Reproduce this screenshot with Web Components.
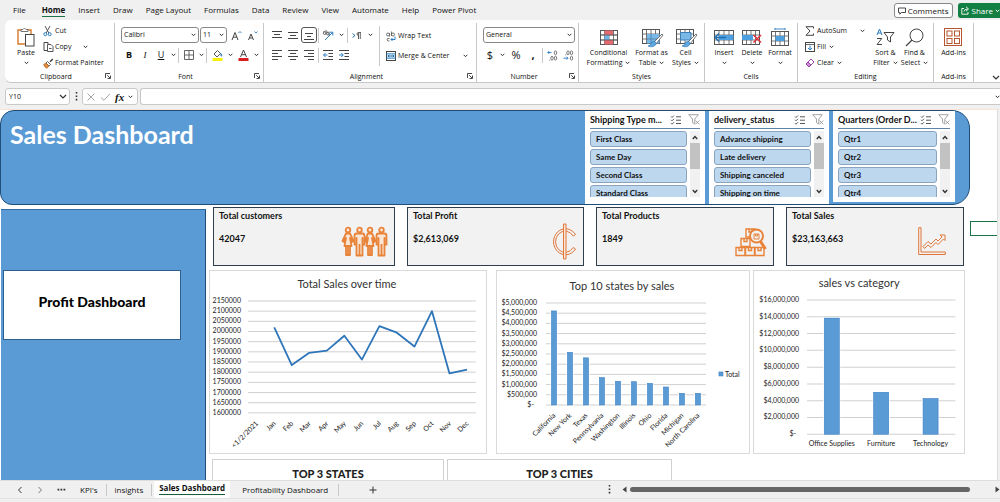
<!DOCTYPE html>
<html lang="en">
<head>
<meta charset="utf-8">
<meta name="viewport" content="width=device-width, initial-scale=1">
<title>Sales Dashboard</title>
<style>
html,body{margin:0;height:100%}
body{font-family:"Open Sans","Noto Sans",sans-serif;font-size:8px;line-height:10px;color:#111;background:#f0f0f0;overflow:hidden}
</style>
</head>
<body>
<excel-app></excel-app>
<script>
const reset = `*{box-sizing:border-box}
button,input,select{font:inherit;color:inherit;background:none;border:0;margin:0;padding:0;outline:0}
a{color:inherit;text-decoration:none}`;

function define(name, html) {
  customElements.define(name, class extends HTMLElement {
    constructor() {
      super();
      this.attachShadow({mode: 'open'});
    }
    connectedCallback() {
      if (this.shadowRoot.childNodes.length) return;
      const t = document.createElement('template');
      t.innerHTML = `<style>${reset}</style>` + (typeof html === 'function' ? html(this) : html);
      this.shadowRoot.append(t.content.cloneNode(true));
    }
  });
}

/* ---------- icons: [width, height, markup] ---------- */
const gridLines = (w, h) => `<rect x=".5" y=".5" width="${w - 1}" height="${h - 1}" fill="#fff" stroke="#555"/><path d="M0 ${h / 3}H${w}M0 ${h * 2 / 3}H${w}M${w / 4} 0V${h}M${w / 2} 0V${h}M${w * 3 / 4} 0V${h}" stroke="#555" stroke-width=".8"/>`;
const bars = (ys, xs) => `<path d="${ys.map((y, i) => `M${xs[i][0]} ${y}H${xs[i][1]}`).join('')}" stroke="#444" stroke-width="1.1"/>`;
const person = (x, skirt) => `<g transform="translate(${x} 0)"><circle cx="5.500" cy="3" r="2.300"/>${skirt
  ? '<path d="M3.500 6.500H7.500L11 14L9.500 15L7.500 11L9 19H2L3.500 11L1.500 15L0 14ZM3.500 19V28H7.500V19M5.500 19V28"/>'
  : '<path d="M2.500 6.500H8.500Q10.500 6.500 10.500 9V17.500H8.500V11V28.500H2.500V11V17.500H.500V9Q.500 6.500 2.500 6.500ZM5.500 17V28"/>'}</g>`;
const box = (x, y) => `<path d="M${x} ${y}h9v8h-9zM${x + 3} ${y}v3h3v-3"/>`;
const brush = `<path d="M20 5L12 13L14 15L21 6Z" fill="#fff" stroke="#555" stroke-width=".8"/><path d="M13 12.500Q9 12 8.500 15Q8 17 6 17Q11 19 13.500 16Q15 14.500 13 12.500Z" fill="#5fa8df" stroke="#1f6fb2" stroke-width=".6"/>`;
const icons = {
  chev: [5, 4, '<path d="M.7 .8L2.500 2.700L4.300 .8" fill="none" stroke="#333"/>'],
  chevBig: [8, 5, '<path d="M1 1L4 4L7 1" fill="none" stroke="#333" stroke-width="1.200"/>'],
  paste: [18, 20, '<path d="M4 3H1V17H8M11 3H14V7" fill="none" stroke="#d87a2a" stroke-width="1.400"/><path d="M4 4.500V2.500H6Q7.500-.5 9 2.500H11V4.500Z" fill="#fff" stroke="#666" stroke-width=".9"/><rect x="8.500" y="7.500" width="8.500" height="11.500" fill="#fff" stroke="#444"/>'],
  cut: [9, 12, '<path d="M2 1L5.800 8M7 1L3.200 8" stroke="#444" stroke-width=".9"/><circle cx="2.300" cy="9.200" r="1.500" fill="none" stroke="#2b7cc1"/><circle cx="6.700" cy="9.200" r="1.500" fill="none" stroke="#2b7cc1"/>'],
  copy: [11, 12, '<path d="M4 9.500H1V1.500H5V3" fill="none" stroke="#444"/><path d="M4.500 3.500H8L10 5.500V10.500H4.500ZM6 7.500H8.500" fill="#fff" stroke="#444" stroke-width=".9"/>'],
  painter: [11, 11, '<path d="M9.800 1L7 3.800" stroke="#444" stroke-width="1.500"/><path d="M4.500 3.500L7.500 6.500L6 8L3 5Z" fill="#fff" stroke="#444" stroke-width=".8"/><path d="M3 5L6 8L4 10.300Q1.500 9.500 .6 6.400Z" fill="#e08a3c" stroke="#a65a1a" stroke-width=".6"/>'],
  borders: [10, 10, '<path d="M.500 .500H9.500V9.500H.500ZM5 .500V9.500M.500 5H9.500" fill="none" stroke="#555" stroke-width=".9"/>'],
  fill: [11, 12, '<path d="M2 5L5.500 1.500L8.500 4.500L5 8Z" fill="#fff" stroke="#444" stroke-width=".9"/><path d="M9 4.500Q10.500 7 9.300 7.300Q8.300 7 9 4.500" fill="#2b7cc1" stroke="#2b7cc1" stroke-width=".6"/><rect x=".5" y="9" width="10" height="3" fill="#f7f10a"/>'],
  fontcolor: [11, 12, '<path d="M2.500 8L5.500 1L8.500 8M3.500 5.700H7.500" fill="none" stroke="#444"/><rect x=".5" y="9" width="10" height="3" fill="#d81e1e"/>'],
  growA: [11, 11, '<path d="M1 10L4 2.500L7 10M2.200 7.200H5.800" fill="none" stroke="#444"/><path d="M7.500 3L9 1.500L10.500 3" fill="none" stroke="#2b7cc1" stroke-width=".9"/>'],
  shrinkA: [11, 11, '<path d="M1.500 10L4 4L6.500 10M2.500 8H5.500" fill="none" stroke="#444"/><path d="M7.500 1.500L9 3L10.500 1.500" fill="none" stroke="#2b7cc1" stroke-width=".9"/>'],
  atop: [10, 10, bars([1.5, 4.5, 7.5], [[0, 10], [2, 8], [0, 10]])],
  amid: [10, 10, bars([2.5, 5.5, 8.5], [[0, 10], [2, 8], [0, 10]])],
  abot: [10, 10, bars([3.5, 6.5, 9.5], [[1, 9], [3, 7], [0, 10]])],
  left: [10, 10, bars([.5, 3.5, 6.5, 9.5], [[0, 10], [0, 6], [0, 10], [0, 6]])],
  center: [10, 10, bars([.5, 3.5, 6.5, 9.5], [[0, 10], [2, 8], [0, 10], [2, 8]])],
  right: [10, 10, bars([.5, 3.5, 6.5, 9.5], [[0, 10], [4, 10], [0, 10], [4, 10]])],
  orient: [12, 12, '<g fill="none" stroke="#555" stroke-width=".8"><circle cx="2.800" cy="4" r="1.500"/><path d="M1.500 2L5 5.500"/><circle cx="6" cy="4.600" r="1.500"/><path d="M3.500 .800L7.500 6"/></g><path d="M3 11L10.500 3.500M7.500 3.200H10.800V6.500" fill="none" stroke="#2b7cc1"/>'],
  rtl: [10, 9, '<path d="M.500 2.500L3 4.500L.500 6.500" fill="none" stroke="#2b7cc1"/><path d="M9 1.500H6.500Q5 1.500 5 3Q5 4.500 6.500 4.500V8M6.500 1.500V8M8.300 1.500V8" fill="none" stroke="#555" stroke-width=".9"/>'],
  outdent: [10, 10, '<path d="M0 .5H10M5.500 3.500H10M5.500 6.500H10M0 9.500H10" stroke="#444"/><path d="M4.500 5H.800M2.500 3L.500 5L2.500 7" fill="none" stroke="#2b7cc1"/>'],
  indent: [10, 10, '<path d="M0 .5H10M5.500 3.500H10M5.500 6.500H10M0 9.500H10" stroke="#444"/><path d="M0 5H4M2.300 3L4.300 5L2.300 7" fill="none" stroke="#2b7cc1"/>'],
  wrap: [10, 11, '<g fill="none" stroke="#555" stroke-width=".8"><circle cx="2" cy="3.500" r="1.500"/><path d="M3.600 2V5.500M5.500 .5V5"/><circle cx="7" cy="3.500" r="1.500"/><path d="M3.500 7.500Q.5 7 1 9Q1.500 10.500 3.500 10"/></g><path d="M9 5.500V8.500H5M6.500 7L5 8.500L6.500 10" fill="none" stroke="#2b7cc1"/>'],
  merge: [10, 10, '<rect x=".5" y=".5" width="9" height="9" fill="#fff" stroke="#444"/><rect x="1" y="3" width="8" height="4" fill="#bfe0f7"/><path d="M0 2.700H10M0 7.300H10" stroke="#2b7cc1" stroke-width=".8"/><path d="M2 5H8M3.200 3.800L2 5L3.200 6.200M6.800 3.800L8 5L6.800 6.200" fill="none" stroke="#1f5f9a" stroke-width=".8"/>'],
  decinc: [11, 11, '<path d="M4.500 2.500H.800M2.300 1L.800 2.500L2.300 4" fill="none" stroke="#2b7cc1" stroke-width=".9"/><g fill="none" stroke="#555" stroke-width=".8"><ellipse cx="8.500" cy="2.800" rx="1.200" ry="1.900"/><ellipse cx="5" cy="8.200" rx="1.200" ry="1.900"/><ellipse cx="8.500" cy="8.200" rx="1.200" ry="1.900"/><path d="M2.300 10.200H3.100"/></g>'],
  decdec: [11, 11, '<path d="M.500 8.200H5M3.500 6.700L5 8.200L3.500 9.700" fill="none" stroke="#2b7cc1" stroke-width=".9"/><g fill="none" stroke="#555" stroke-width=".8"><ellipse cx="5" cy="2.800" rx="1.200" ry="1.900"/><ellipse cx="8.500" cy="2.800" rx="1.200" ry="1.900"/><ellipse cx="8.500" cy="8.200" rx="1.200" ry="1.900"/><path d="M2.300 4.800H3.100"/></g>'],
  cond: [18, 15, gridLines(18, 15) + '<path d="M4.500 .5H13V5H4.500ZM4.500 10H13V14.500H4.500Z" fill="#e46a6f"/><path d="M4.500 5H9V10H4.500Z" fill="#6fb3e6"/><path d="M0 5H18M0 10H18" stroke="#555" stroke-width=".8"/>'],
  fmtTable: [20, 17, gridLines(18, 15) + '<path d="M5 5H17.500V14.500H5Z" fill="#7ab8e8"/><path d="M9 5V15M5 10H18" stroke="#4d7ea6" stroke-width=".8"/>' + brush],
  cellStyle: [20, 17, gridLines(18, 15) + '<path d="M4.500 3.500H15V11H4.500Z" fill="#7ab8e8" stroke="#3c7fb5"/>' + brush],
  insert: [20, 15, gridLines(20, 15) + '<path d="M5 5H19.500V10H5Z" fill="#4da0e0"/><path d="M12 7.500H1.500M5 3.500L1 7.500L5 11.500" fill="none" stroke="#1f6fb2" stroke-width="1.300"/>'],
  delete: [20, 15, gridLines(18, 15) + '<path d="M0 5H11V10H0Z" fill="#4da0e0"/><path d="M11.500 5L19 12.500M19 5L11.500 12.500" stroke="#e0333c" stroke-width="1.500"/>'],
  format: [18, 18, '<g transform="translate(0 3)">' + gridLines(18, 15) + '<path d="M4.500 5H13.500V10H4.500Z" fill="#4da0e0"/></g><path d="M4 1H14M4 0V2M14 0V2" stroke="#2b7cc1" stroke-width=".9"/>'],
  sum: [10, 10, '<path d="M8.500 2.500V.7H1L5 5L1 9.300H8.500V7.500" fill="none" stroke="#444"/>'],
  filldown: [10, 10, '<rect x=".5" y=".5" width="9" height="9" fill="#fff" stroke="#444"/><path d="M.5 2.500H9.500" stroke="#444" stroke-width=".8"/><path d="M5 3.500V8M3 6L5 8L7 6" fill="none" stroke="#2b7cc1"/>'],
  eraser: [10, 10, '<path d="M1 6L6 1L9 4L4 9Z" fill="#fff" stroke="#9b45a8"/><path d="M1 6L3 4L6 7L4 9Z" fill="#c98ad2" stroke="#9b45a8"/>'],
  sort: [19, 18, '<path d="M1 7L3.500 1L6 7M2 5H5" fill="none" stroke="#2b7cc1"/><path d="M1 10.500H5.800L1 16.500H6" fill="none" stroke="#444"/><path d="M8 4.500H18L14.500 9V14L11.500 12V9Z" fill="#fff" stroke="#444"/>'],
  find: [19, 19, '<circle cx="11.500" cy="7.500" r="6.500" fill="#fff" stroke="#444"/><path d="M7 12L1 18" stroke="#444" stroke-width="1.200"/>'],
  addins: [18, 18, '<rect x=".5" y=".5" width="17" height="17" fill="#fff" stroke="#b5562f"/><g fill="none" stroke="#b5562f"><rect x="3" y="3" width="5" height="5"/><rect x="10.500" y="3" width="5" height="5"/><rect x="3" y="10.500" width="5" height="5"/><rect x="10.500" y="10.500" width="5" height="5"/></g>'],
  launch: [6, 6, '<path d="M.5 5V.5H5M2.200 2.200L5 5M5.500 2.500V5.500H2.500" fill="none" stroke="#333" stroke-width=".9"/>'],
  comment: [8, 8, '<path d="M.5 1H7.500V5.500H3.500L1.800 7.200V5.500H.5Z" fill="none" stroke="#333" stroke-width=".9"/>'],
  share: [9, 9, '<path d="M3 2.500H.8V8.200H7V6M3 5.500Q3.500 3 6.500 3M5 .8L7.500 3L5 5.200" fill="none" stroke="#fff" stroke-width=".9"/>'],
  shareChev: [5, 4, '<path d="M.7 .8L2.500 2.700L4.300 .8" fill="none" stroke="#fff"/>'],
  cross: [10, 8, '<path d="M1.500 .500L8.500 7.500M8.500 .500L1.500 7.500" stroke="#999" stroke-width=".9"/>'],
  tick: [11, 8, '<path d="M1 4.500L4 7.300L10 .700" fill="none" stroke="#999" stroke-width=".9"/>'],
  multi: [12, 10, '<path d="M1 1.500L2 2.500L4 .500M1 4.800L2 5.800L4 3.800M1 8.200L2 9.200L4 7.200M6 1.800H11M6 5.200H11M6 8.500H11" fill="none" stroke="#444" stroke-width=".9"/>'],
  nofilter: [12, 11, '<path d="M.700 .700H10.300L6.800 5V10L4.500 8.500V5Z" fill="#fff" stroke="#9a9a9a" stroke-width=".9"/><path d="M7.500 6.500L11.300 10.300M11.300 6.500L7.500 10.300" stroke="#9a9a9a" stroke-width=".9"/>'],
  up: [6, 5, '<path d="M.8 4L3 1.500L5.200 4" fill="none" stroke="#333" stroke-width="1.400"/>'],
  down: [6, 5, '<path d="M.8 1L3 3.500L5.200 1" fill="none" stroke="#333" stroke-width="1.400"/>'],
  prev: [6, 8, '<path d="M4.500 1L1.500 4L4.500 7" fill="none" stroke="#333"/>'],
  next: [6, 8, '<path d="M1.500 1L4.500 4L1.500 7" fill="none" stroke="#777"/>'],
  plus: [8, 8, '<path d="M4 .5V7.500M.5 4H7.500" stroke="#333"/>'],
  dots: [3, 9, '<path d="M.7 0h1.600v1.600h-1.600zM.7 3.400h1.600v1.600h-1.600zM.7 6.800h1.600v1.600h-1.600z" fill="#333"/>'],
  ellipsis: [9, 3, '<path d="M.5 .7h1.800v1.700h-1.800zM3.500 .7h1.800v1.700h-1.800zM6.500 .7h1.800v1.700h-1.800z" fill="#333"/>'],
  triL: [5, 7, '<path d="M4.500 .5V6.500L.5 3.500Z" fill="#444"/>'],
  triR: [5, 7, '<path d="M.5 .5V6.500L4.500 3.500Z" fill="#444"/>'],
  people: [46, 30, `<g fill="#fbe6d6" stroke="#e8833a" stroke-width="1.800" stroke-linejoin="round">${person(.5, 1)}${person(12, 0)}${person(22.5, 1)}${person(34, 0)}</g>`],
  cent: [26, 37, '<g fill="none" stroke="#e0763a" stroke-width="1"><path d="M24.500 11.500A12 13 0 1 0 24.500 26L22.200 24.500A9.600 10.600 0 1 1 22.200 13Z"/><path d="M12.500 1H15V36H12.500Z" fill="#fbe6d6"/></g>'],
  boxes: [32, 30, `<g fill="none" stroke="#e8833a" stroke-width="1.400">${box(1, 20.5)}${box(10.5, 20.5)}${box(20, 20.5)}${box(6, 11.500)}${box(11, 2)}</g><circle cx="21.500" cy="9" r="6.500" fill="#f2f2f2" stroke="#e8833a" stroke-width="2"/><path d="M19 7v5h5v-5zM20.500 7v2h2v-2" fill="none" stroke="#e8833a"/><path d="M25.500 14.500L30.500 22" stroke="#e8833a" stroke-width="3"/>`],
  trend: [28, 29, '<g fill="none" stroke="#e0763a" stroke-width="1"><path d="M.700 .700H3V25H27.300V27.500H.700Z"/><path d="M5 19.500L10 14.500L13 17L18 12L20 14L24 10L22 8H27V13.500L25.500 12L20 17.500L18 15.500L13 20.500L10 18L6.500 21.500Z"/></g>']
};
define('ui-icon', host => {
  const [w, h, body] = icons[host.getAttribute('name')];
  return `<style>:host{display:block;flex:none;width:${w}px;height:${h}px}svg{display:block;overflow:visible}</style><svg width="${w}" height="${h}" viewBox="0 0 ${w} ${h}" aria-hidden="true">${body}</svg>`;
});

/* ---------- title tabs ---------- */
define('menu-bar', `<style>
:host{display:flex;height:20px;align-items:center;font-size:8px;padding-left:5px}
nav{display:flex;gap:4px}
a{padding:0 4px 0 5px;line-height:13px;white-space:nowrap}
a:first-child{padding:0 7px 0 8px}
a.on{font-weight:700}
a.on::after{content:"";display:block;height:1px;background:#1a7346}
.r{margin-left:auto;display:flex;gap:5px;align-self:flex-end;margin-bottom:2px}
button{display:flex;align-items:center;gap:2px;height:15px;border-radius:3px;padding:0 3px;background:#fff;border:1px solid #888;white-space:nowrap}
.g{background:#138043;border-color:#138043;color:#fff;border-radius:3px 0 0 3px;border-right:0;padding:0 0 0 2px}
</style>
<nav>${['File', 'Home', 'Insert', 'Draw', 'Page Layout', 'Formulas', 'Data', 'Review', 'View', 'Automate', 'Help', 'Power Pivot'].map(t => `<a href="#" class="${t === 'Home' ? 'on' : ''}">${t}</a>`).join('')}</nav>
<div class="r"><button><ui-icon name="comment"></ui-icon>Comments</button><button class="g"><ui-icon name="share"></ui-icon>Share<ui-icon name="shareChev"></ui-icon></button></div>`);

/* ---------- ribbon ---------- */
define('ribbon-group', host => `<style>
:host{display:grid;grid-template-rows:1fr 12px;min-width:0;position:relative;margin:3px 0;border-right:1px solid #c8c8c8}
.b{min-width:0}
.l{display:flex;justify-content:center;line-height:11px;font-size:7px}
:host([launch]) .l{padding-right:7px}
ui-icon{position:absolute;right:3px;bottom:4px}
</style><div class="b"><slot></slot></div><div class="l">${host.getAttribute('label') || ''}</div>${host.hasAttribute('launch') ? '<ui-icon name="launch"></ui-icon>' : ''}`);

define('big-tool', host => `<style>
:host{display:block;flex:none}
button{display:flex;flex-direction:column;align-items:center;width:100%;font-size:7px;line-height:10px;white-space:nowrap}
.i{height:22px;display:flex;align-items:center}
.t{display:flex;align-items:center;gap:3px;height:10px}
</style><button><span class="i"><ui-icon name="${host.getAttribute('icon')}"></ui-icon></span><span class="t">${host.getAttribute('a')}</span><span class="t">${host.getAttribute('b') || ''}${host.hasAttribute('plain') ? '' : '<ui-icon name="chev"></ui-icon>'}</span></button>`);

define('row-tool', host => `<style>
:host{display:block}
button{display:flex;align-items:center;height:16px;font-size:7px;white-space:nowrap;width:100%}
.i{width:12px;flex:none}
ui-icon[name=chev]{margin-left:3px}
:host([far]) ui-icon[name=chev]{margin-left:auto}
:host([wide]) ui-icon[name=chev]{margin-left:12px}
</style><button><span class="i"><ui-icon name="${host.getAttribute('icon')}"></ui-icon></span>${host.getAttribute('text')}${host.hasAttribute('drop') || host.hasAttribute('far') ? '<ui-icon name="chev"></ui-icon>' : ''}</button>`);

define('drop-box', host => `<style>
:host{display:block;position:relative;height:16px;flex:none}
select{appearance:none;width:100%;height:100%;border:1px solid #888;border-radius:3px;background:#fff;padding:0 3px 1px 2px;font-size:7px}
ui-icon{position:absolute;right:3px;top:6px;pointer-events:none}
</style><select aria-label="${host.getAttribute('label')}"><option>${host.getAttribute('value')}</option></select><ui-icon name="chev"></ui-icon>`);

const ib = (n, w = 16, cls = '') => `<button class="ib ${cls}" style="width:${w}px" aria-label="${n}"><ui-icon name="${n}"></ui-icon></button>`;
const tb = (t, w, cls) => `<button class="ib ${cls}" style="width:${w}px">${t}</button>`;
define('ribbon-bar', `<style>
:host{display:grid;grid-template-columns:110fr 149fr 213fr 102fr 126fr 93fr 136fr 40fr 26fr;height:63px;margin-left:5px;background:#fff;border-radius:6px 0 0 6px;border-bottom:1px solid #c8c8c8}
.row{display:flex;align-items:center;height:20px}
.top{padding-top:2px;height:22px}
.ib{display:flex;align-items:center;justify-content:center;height:16px;flex:none}
.boxed{border:1px solid #555;border-radius:3px}
.sep{width:1px;height:15px;background:#c8c8c8;flex:none;margin:0 1px}
.cols{display:flex}
.clip{padding-left:8px;gap:4px}
.clip>div{width:64px}
.f{padding-left:6px}
.sz{font-size:9px}.b{font-weight:700}.i{font-style:italic;font-family:"Liberation Serif",serif}.u{text-decoration:underline}.big{font-size:11px}
.al{padding-left:5px}
.side{border-left:1px solid #c8c8c8;margin:3px 0 4px;padding:0 4px 0 6px;width:93px;height:40px;display:grid;grid-template-rows:20px 20px;align-items:center}
.main{width:110px}
.st{justify-content:center;padding:3px 4px 0 6px}
.ed{padding:0 6px 0 7px}
.ed .rows{width:60px}
.big-cols{padding-top:3px}
.mid{justify-content:center}
.more{display:flex;justify-content:flex-end;align-items:flex-end;padding:0 0 6px}
</style>
<ribbon-group label="Clipboard" launch><div class="cols clip"><big-tool icon="paste" a="Paste" style="width:26px;padding-top:3px"></big-tool>
<div><row-tool icon="cut" text="Cut"></row-tool><row-tool icon="copy" text="Copy" drop wide></row-tool><row-tool icon="painter" text="Format Painter"></row-tool></div></div></ribbon-group>
<ribbon-group label="Font" launch><div class="f"><div class="row top"><drop-box label="Font" value="Calibri" style="width:78px"></drop-box><drop-box label="Font size" value="11" style="width:27px;margin:0 1px"></drop-box>${ib('growA')}${ib('shrinkA')}</div>
<div class="row">${tb('B', 16, 'sz b')}${tb('I', 16, 'sz i')}${tb('U', 16, 'sz u')}${ib('chev', 8)}<span class="sep"></span>${ib('borders', 17)}${ib('chev', 8)}<span class="sep"></span>${ib('fill', 18)}${ib('chev', 8)}${ib('fontcolor', 18)}${ib('chev', 8)}</div></div></ribbon-group>
<ribbon-group label="Alignment" launch><div class="cols al"><div class="main"><div class="row top">${ib('atop')}${ib('amid')}${ib('abot', 16, 'boxed')}<span class="sep"></span>${ib('orient')}${ib('chev', 10)}<span class="sep"></span>${ib('rtl')}${ib('chev', 10)}</div>
<div class="row">${ib('left')}${ib('center')}${ib('right')}<span class="sep"></span>${ib('outdent')}${ib('indent')}</div></div>
<div class="side"><row-tool icon="wrap" text="Wrap Text"></row-tool><row-tool icon="merge" text="Merge &amp; Center" far></row-tool></div></div></ribbon-group>
<ribbon-group label="Number" launch><div class="f"><div class="row top"><drop-box label="Number format" value="General" style="width:92px"></drop-box></div>
<div class="row">${tb('$', 14, 'big')}${ib('chev', 10)}${tb('%', 18, 'big')}${tb('<b>,</b>', 16, 'big')}<span class="sep"></span>${ib('decinc', 16)}${ib('decdec', 16)}</div></div></ribbon-group>
<ribbon-group label="Styles"><div class="cols st"><big-tool icon="cond" a="Conditional" b="Formatting" style="width:48px"></big-tool><big-tool icon="fmtTable" a="Format as" b="Table" style="width:38px"></big-tool><big-tool icon="cellStyle" a="Cell" b="Styles" style="width:30px"></big-tool></div></ribbon-group>
<ribbon-group label="Cells"><div class="cols st"><big-tool icon="insert" a="Insert" style="width:28px"></big-tool><big-tool icon="delete" a="Delete" style="width:28px"></big-tool><big-tool icon="format" a="Format" style="width:28px"></big-tool></div></ribbon-group>
<ribbon-group label="Editing"><div class="cols"><div class="ed"><div class="rows"><row-tool icon="sum" text="AutoSum" far></row-tool><row-tool icon="filldown" text="Fill" drop></row-tool><row-tool icon="eraser" text="Clear" drop></row-tool></div></div><div class="cols big-cols"><big-tool icon="sort" a="Sort &amp;" b="Filter" style="width:29px"></big-tool><big-tool icon="find" a="Find &amp;" b="Select" style="width:29px"></big-tool></div></div></ribbon-group>
<ribbon-group label="Add-ins"><div class="cols big-cols mid"><big-tool icon="addins" a="Add-ins" plain></big-tool></div></ribbon-group>
<div class="more"><ui-icon name="chevBig"></ui-icon></div>`);

/* ---------- formula bar ---------- */
define('formula-bar', `<style>
:host{display:flex;align-items:center;height:17px;margin:5px 0 4px 5px;font-size:8px}
.bx{display:flex;align-items:center;height:17px;border:1px solid #c9c9c9;border-radius:3px;background:#fff}
.n{width:65px;padding:0 2px 0 3px;justify-content:space-between}.n input{width:48px;font-size:7px;min-width:0}
.d{width:12px;display:flex;justify-content:center}
.fx{width:56px;gap:4px;padding:0 3px;margin-right:2px}
.fx i{font:italic 700 11px/12px "Liberation Serif",serif}
.in{flex:1;border-right:0;border-radius:3px 0 0 3px}.in input{flex:1;height:100%}
</style>
<div class="bx n"><input value="Y10" aria-label="Name box"><ui-icon name="chevBig"></ui-icon></div><span class="d"><ui-icon name="dots"></ui-icon></span>
<div class="bx fx"><ui-icon name="cross"></ui-icon><ui-icon name="tick"></ui-icon><i>fx</i><ui-icon name="chev"></ui-icon></div>
<div class="bx in"><input aria-label="Formula"><ui-icon name="chev"></ui-icon></div>`);

/* ---------- slicer ---------- */
define('slicer-panel', host => `<style>
:host{display:flex;flex-direction:column;flex:none;background:#fff;padding:0 5px;color:#111}
header{display:flex;align-items:center;height:18px;border-bottom:1px solid #5f83a8;margin-bottom:2px;gap:6px}
h2{margin:0;flex:1 1 0;min-width:0;font-size:9px;font-weight:700;line-height:16px;white-space:nowrap}
.w{display:flex;gap:3px;height:66px}
.l{flex:1;display:flex;flex-direction:column;gap:2px;overflow:hidden}
.l button{flex:none;height:16px;border:1px solid #8aa4c0;border-radius:3px;background:#bdd7ee;text-align:left;padding:0 5px;font-size:8px;line-height:14px;font-weight:700}
.s{width:10px;background:#f1f1f1;display:flex;flex-direction:column;align-items:center;padding:4px 0 3px}
.s i{width:10px;height:26px;background:#c2c2c2;margin:3px 0 auto}
</style><header><h2>${host.getAttribute('heading')}</h2><ui-icon name="multi"></ui-icon><ui-icon name="nofilter"></ui-icon></header>
<div class="w"><div class="l">${host.getAttribute('items').split('|').map(t => `<button>${t}</button>`).join('')}</div><div class="s"><ui-icon name="up"></ui-icon><i></i><ui-icon name="down"></ui-icon></div></div>`);

/* ---------- KPI card ---------- */
define('kpi-card', host => `<style>
:host{display:flex;justify-content:space-between;align-items:flex-end;height:59px;background:#f2f2f2;border:1px solid #2f3d4d;padding:0 6px 5px 5px;color:#111}
dl{margin:0;align-self:flex-start;font-weight:700;font-size:9px;line-height:16px}
dt{height:23px}dd{margin:0}
.i{height:37px;display:flex;align-items:center}
</style><dl><dt>${host.getAttribute('label')}</dt><dd>${host.getAttribute('value')}</dd></dl><span class="i"><slot></slot></span>`);

/* ---------- charts ---------- */
const chartCss = `<style>:host{display:block;border:1px solid #d9d9d9;background:#fff;min-width:0}
svg{display:block;width:100%;height:auto;font-size:7px;fill:#222}
.t{font-size:11px;fill:#333}.g{stroke:#d0d0d0;stroke-width:1}.bar{fill:#5b9bd5;stroke:#3a80c4;stroke-width:.6}</style>`;
const money = v => v ? '$' + v.toLocaleString('en-US') : '$-';
function axis(c) {
  let s = '';
  const n = (c.max - c.min) / c.step;
  for (let k = 0; k <= n; k++) {
    const v = c.max - k * c.step, y = c.y0 + (c.y1 - c.y0) * k / n;
    s += `<path class="g" d="M${c.x0} ${y}H${c.x1}"/><text x="${c.lx - (v ? 0 : 3)}" y="${y + 2}" text-anchor="end">${c.fmt(v)}</text>`;
  }
  return s;
}
function labels(c) {
  const st = (c.x1 - c.x0) / c.cats.length;
  return c.cats.map((t, i) => {
    const x = c.x0 + st * (i + .5);
    return c.flat ? `<text x="${x}" y="${c.y1 + 12}" text-anchor="middle">${t}</text>`
      : `<text transform="translate(${x + 2} ${c.y1 + 11}) rotate(-45)" text-anchor="end">${t}</text>`;
  }).join('');
}
const py = (c, v) => c.y1 - (v - c.min) / (c.max - c.min) * (c.y1 - c.y0);
const title = (c, s) => `<text class="t" x="${c.tx}" y="${c.ty}" text-anchor="middle">${s}</text>`;

define('line-chart', () => {
  const c = {x0: 38, x1: 266, y0: 30, y1: 142, min: 1600000, max: 2150000, step: 50000, lx: 31, tx: 137, ty: 17, fmt: String,
    cats: ['&lt;1/2/2021', 'Jan', 'Feb', 'Mar', 'Apr', 'May', 'Jun', 'Jul', 'Aug', 'Sep', 'Oct', 'Nov', 'Dec']};
  const vals = [2020000, 1835000, 1895000, 1906000, 1979000, 1862000, 2026000, 1994000, 1926000, 2100000, 1794000, 1813000];
  const st = (c.x1 - c.x0) / 13;
  return chartCss + `<svg viewBox="0 0 276 182">${title(c, 'Total Sales over time')}${axis(c).replace('x="28"', 'x="31"')}<polyline fill="none" stroke="#2e75b9" stroke-width="1.800" stroke-linejoin="round" points="${vals.map((v, i) => `${c.x0 + st * (i + 1.5)},${py(c, v)}`).join(' ')}"/>${labels(c)}</svg>`;
});
const barsOf = (c, vals, w) => vals.map((v, i) => {
  const x = c.x0 + (c.x1 - c.x0) / vals.length * (i + .5) - w / 2, y = py(c, v);
  return `<rect x="${x - 1}" y="${y - 1}" width="${w + 2}" height="${c.y1 - y + 1}" fill="#fff"/><rect class="bar" x="${x}" y="${y}" width="${w}" height="${c.y1 - y}"/>`;
}).join('');
define('state-chart', () => {
  const c = {x0: 49, x1: 209, y0: 32, y1: 134, min: 0, max: 5000000, step: 500000, lx: 40, tx: 125, ty: 19, fmt: money,
    cats: ['California', 'New York', 'Texas', 'Pennsylvania', 'Washington', 'Illinois', 'Ohio', 'Florida', 'Michigan', 'North Carolina']};
  return chartCss + `<svg viewBox="0 0 252 182">${title(c, 'Top 10 states by sales')}${axis(c)}${barsOf(c, [4610000, 2580000, 2310000, 1340000, 1160000, 1140000, 1060000, 880000, 570000, 570000], 5)}${labels(c)}<rect class="bar" x="222" y="101" width="4" height="4"/><text x="228" y="106">Total</text></svg>`;
});
define('category-chart', () => {
  const c = {x0: 53, x1: 201, y0: 29, y1: 163, min: 0, max: 16000000, step: 2000000, lx: 45, tx: 105, ty: 16, fmt: money, flat: true,
    cats: ['Office Supplies', 'Furniture', 'Technology']};
  return chartCss + `<svg viewBox="0 0 210 182">${title(c, 'sales vs category')}${axis(c)}${barsOf(c, [13850000, 5000000, 4250000], 15)}${labels(c)}</svg>`;
});

/* ---------- worksheet ---------- */
define('work-sheet', `<style>
:host{display:flex;flex-direction:column;flex:1;min-height:0;overflow:hidden;background:#fff;margin-right:2px;border-right:1px solid #ddd;border-top:1px solid #fbe3d6;font-family:Lato,sans-serif}
.ban{display:flex;flex:none;height:95px;margin-right:27px;background:#5b9bd5;border:1px solid #1f4e79;border-radius:14px 18px 18px 12px;padding-right:14px;gap:4px}
h1{margin:0;padding:9px 0 0 9px;flex:1;color:#fff;font-size:25px;line-height:28px;font-weight:700}
.ban slicer-panel{width:120px}
.ban slicer-panel:last-child{width:122px;margin-bottom:2px}
.body{display:flex;flex:1;min-height:0;padding-top:2px}
aside{width:205px;margin:2px 0 0 1px;background:#5b9bd5;border-right:1px solid #1f4e79;border-top:1px solid #2e6da4;flex:none;padding:60px 0 0 2px}
aside a{display:flex;align-items:center;justify-content:center;width:178px;height:70px;background:#fff;border:1px solid #2f5f8f;color:#000;font-weight:900;font-size:14px;line-height:16px;padding-bottom:7px}
main{flex:1;min-width:0;display:flex;flex-direction:column;padding-left:3px}
.k{display:grid;grid-template-columns:182fr 177fr 178fr 178fr;gap:12px;margin:0 1px 4px 4px}
.c{display:flex;align-items:flex-start;margin-bottom:5px}
line-chart{flex:278}state-chart{flex:254;margin-left:9px}category-chart{flex:212;margin-left:3px}
.t{display:flex;gap:3px;padding-left:3px;flex:1}
.t h3{margin:0;width:232px;border:1px solid #d0d0d0;border-bottom:0;text-align:center;font-size:11px;line-height:14px;padding-top:7px;font-weight:900;color:#222}
.t h3:last-child{width:225px}
.sel{width:27px;height:15px;margin:14px 0 0 5px;border:1px solid #1a7346;border-right:0;flex:none}
</style>
<div class="ban"><h1>Sales Dashboard</h1>
<slicer-panel heading="Shipping Type m..." items="First Class|Same Day|Second Class|Standard Class"></slicer-panel>
<slicer-panel heading="delivery_status" items="Advance shipping|Late delivery|Shipping canceled|Shipping on time"></slicer-panel>
<slicer-panel heading="Quarters (Order D..." items="Qtr1|Qtr2|Qtr3|Qtr4"></slicer-panel></div>
<div class="body"><aside><a href="#">Profit Dashboard</a></aside>
<main><div class="k">
<kpi-card label="Total customers" value="42047"><ui-icon name="people"></ui-icon></kpi-card>
<kpi-card label="Total Profit" value="$2,613,069"><ui-icon name="cent"></ui-icon></kpi-card>
<kpi-card label="Total Products" value="1849"><ui-icon name="boxes"></ui-icon></kpi-card>
<kpi-card label="Total Sales" value="$23,163,663"><ui-icon name="trend" style="margin-right:11px"></ui-icon></kpi-card></div>
<div class="c"><line-chart></line-chart><state-chart></state-chart><category-chart></category-chart></div>
<div class="t"><h3>TOP 3 STATES</h3><h3>TOP 3 CITIES</h3></div></main>
<div class="sel"></div></div>`);

/* ---------- sheet tabs ---------- */
define('sheet-tabs', `<style>
:host{display:flex;align-items:center;height:19px;margin-bottom:3px;border-bottom:1px solid #e2e2e2;border-top:1px solid #ddd;font-size:8px;background:#f0f0f0;flex:none}
.n{display:flex;align-items:center;gap:14px;padding:0 6px 0 17px}
nav{display:flex;align-items:center}
nav a{padding:0 8px;line-height:12px;border-right:1px solid #c8c8c8;white-space:nowrap}
nav a:last-child{padding-right:10px}
nav a.on{background:#fff;padding:0 5px 3px;line-height:13px;font-weight:700;border:0;margin:0 4px 0 2px;border-radius:0 0 3px 3px;align-self:flex-start}
nav a.on span{display:block;border-bottom:1px solid #1a5c3a}
.p{margin-left:30px}
.s{margin-left:auto;width:392px;display:flex;align-items:center;gap:3px}
.s i{flex:1;height:5px;border-radius:3px;background:#666;margin-right:22px}
.s ui-icon:first-child{margin-right:8px}
</style><div class="n"><ui-icon name="prev"></ui-icon><ui-icon name="next"></ui-icon><ui-icon name="ellipsis"></ui-icon></div>
<nav><a href="#">KPI's</a><a href="#">insights</a><a href="#" class="on"><span>Sales Dashboard</span></a><a href="#">Profitability Dashboard</a></nav>
<button class="p" aria-label="New sheet"><ui-icon name="plus"></ui-icon></button>
<div class="s"><ui-icon name="dots"></ui-icon><ui-icon name="triL"></ui-icon><i></i><ui-icon name="triR"></ui-icon></div>`);

define('excel-app', `<style>:host{display:flex;flex-direction:column;height:100vh}menu-bar,ribbon-bar,formula-bar{flex:none}</style>
<menu-bar></menu-bar><ribbon-bar></ribbon-bar><formula-bar></formula-bar><work-sheet></work-sheet><sheet-tabs></sheet-tabs>`);
</script>
</body>
</html>
